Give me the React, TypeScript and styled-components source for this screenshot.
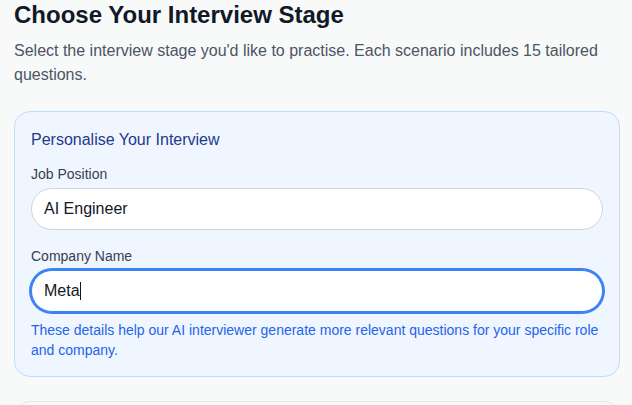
import styled, { createGlobalStyle } from "styled-components";

const GlobalStyle = createGlobalStyle`
  html, body {
    margin: 0;
    padding: 0;
    background: #f8f9f9;
  }
  body {
    font-family: "Liberation Sans", Arial, sans-serif;
  }
  * {
    box-sizing: border-box;
  }
`;

const Page = styled.div`
  padding: 0 12px 0 14px;
  display: flex;
  flex-direction: column;
  height: 405px;
  overflow: hidden;
`;

const Heading = styled.h1`
  margin: 0;
  font-size: 24px;
  line-height: 30px;
  font-weight: 700;
  color: #111827;
`;

const Intro = styled.p`
  margin: 9px 0 24px;
  font-size: 16px;
  line-height: 24px;
  color: #4b5563;
`;

const Card = styled.section<{ $tone?: "blue" | "plain" }>`
  border: 1px solid ${(p) => (p.$tone === "blue" ? "#bfdbfe" : "#e5e7eb")};
  background: ${(p) => (p.$tone === "blue" ? "#eff6ff" : "#f8f9f9")};
  border-radius: 16px;
  padding: 16px;
  flex-shrink: 0;
`;

const CardTitle = styled.h3`
  margin: 0 0 12px;
  font-size: 16px;
  line-height: 24px;
  font-weight: 400;
  color: #1e3a8a;
`;

const Field = styled.div`
  & + & {
    margin-top: 16px;
  }
`;

const Label = styled.label`
  display: block;
  margin-bottom: 4px;
  font-size: 14px;
  line-height: 20px;
  color: #374151;
`;

const InputWrap = styled.div`
  position: relative;
`;

const TextInput = styled.input<{ $active?: boolean }>`
  display: block;
  width: 100%;
  height: 42px;
  padding: 8px 12px;
  border-radius: 999px;
  border: 1px solid ${(p) => (p.$active ? "#3b82f6" : "#d1d5db")};
  box-shadow: ${(p) => (p.$active ? "0 0 0 2px #3b82f6" : "none")};
  background: #fff;
  font-family: "Liberation Sans", Arial, sans-serif;
  font-size: 16px;
  line-height: 24px;
  color: #111827;
  outline: none;
`;

/* text caret drawn over the focused field, just after the typed value */
const Caret = styled.span<{ $left: number }>`
  position: absolute;
  top: 12px;
  left: ${(p) => p.$left}px;
  width: 1px;
  height: 18px;
  background: #111827;
  pointer-events: none;
`;

const Hint = styled.p`
  margin: 8px 0 0;
  font-size: 14px;
  line-height: 20px;
  color: #2563eb;
`;

const NextCard = styled(Card)`
  margin-top: 24px;
  height: 80px;
`;

export default function App() {
  return (
    <>
      <GlobalStyle />
      <Page>
        <Heading>Choose Your Interview Stage</Heading>
        <Intro>
          Select the interview stage you'd like to practise. Each scenario includes 15 tailored
          questions.
        </Intro>
        <Card $tone="blue">
          <CardTitle>Personalise Your Interview</CardTitle>
          <Field>
            <Label htmlFor="job">Job Position</Label>
            <TextInput id="job" defaultValue="AI Engineer" />
          </Field>
          <Field>
            <Label htmlFor="company">Company Name</Label>
            <InputWrap>
              <TextInput id="company" defaultValue="Meta" $active />
              <Caret $left={49} />
            </InputWrap>
          </Field>
          <Hint>
            These details help our AI interviewer generate more relevant questions for your specific
            role and company.
          </Hint>
        </Card>
        <NextCard />
      </Page>
    </>
  );
}
